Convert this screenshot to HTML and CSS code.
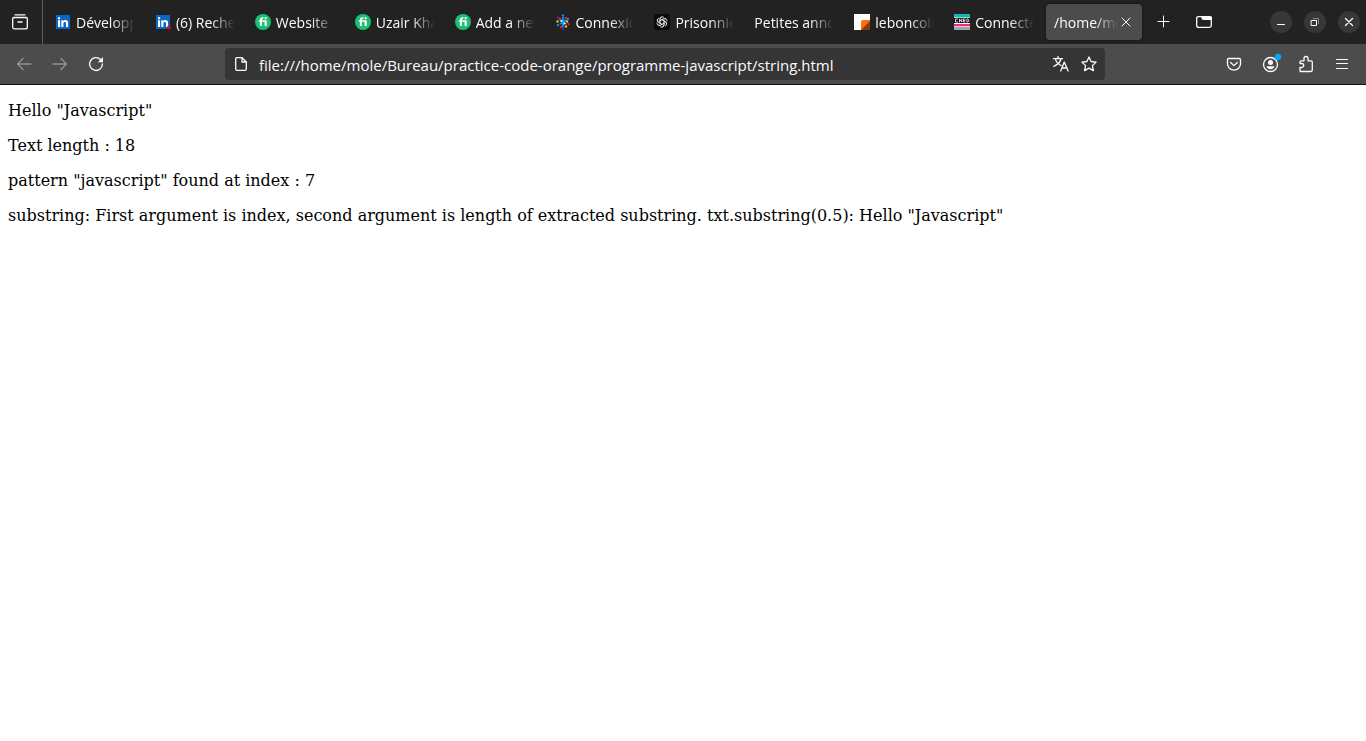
FILE: index.html
```html
<!DOCTYPE html>
<html lang="fr">
<head>
<meta charset="utf-8">
<title>string.html</title>
<link rel="stylesheet" href="styles.css">
</head>
<body>
<svg class="defs" width="0" height="0" aria-hidden="true">
  <symbol id="linkedin" viewBox="0 0 16 16">
    <path fill="#0a66c2" d="M1 1h14v14H1z"/>
    <path fill="#fff" d="M3 6.300h2.100V13H3zM3 3.200h2.100v2H3zM6.300 6.300h2v1c.5-.8 1.200-1.200 2.200-1.200 1.800 0 2.600 1.100 2.600 3.100V13H11V9.500c0-1-.3-1.600-1.200-1.600s-1.400.6-1.400 1.700V13H6.300z"/>
  </symbol>
  <symbol id="fiverr" viewBox="0 0 16 16">
    <circle cx="8" cy="8" r="8" fill="#1dbf73"/>
    <path fill="#fff" d="M3.700 6.200h1.200v-.4c0-1.700 1-2.500 2.700-2.500h.8v1.700h-.6c-.7 0-1 .3-1 .9v.3h4.900V12H9.600V7.800H6.800V12H4.900V7.800H3.700z"/>
    <circle cx="10.600" cy="4.200" r="1.100" fill="#fff"/>
  </symbol>
</svg>

<header class="browser">
  <div class="tabbar">
    <button class="view-button" aria-label="Firefox View">
      <svg class="icon" viewBox="0 0 16 16"><path class="line" d="M3 .8h10M1.800 3.500h12.400q1.100 0 1.100 1.100v8.300q0 2-2 2H2.700q-2 0-2-2V4.600q0-1.100 1.100-1.100zM6 8h4"/></svg>
    </button>
    <nav class="tabs" aria-label="Onglets">
      <button class="tab"><svg class="icon"><use href="#linkedin"/></svg><span class="title">Développeur</span></button>
      <button class="tab"><svg class="icon"><use href="#linkedin"/><circle cx="14" cy="13.500" r="2" fill="#cc1016"/></svg><span class="title">(6) Recherche</span></button>
      <button class="tab"><svg class="icon"><use href="#fiverr"/></svg><span class="title">Website</span></button>
      <button class="tab"><svg class="icon"><use href="#fiverr"/></svg><span class="title">Uzair Khan</span></button>
      <button class="tab"><svg class="icon"><use href="#fiverr"/></svg><span class="title">Add a new</span></button>
      <button class="tab"><svg class="icon" viewBox="0 0 16 16">
        <path stroke="#0a91e8" stroke-width="2" d="M8 3v10M5 6l6 4M11 6l-6 4"/>
        <g fill="#1787e8"><circle cx="8" cy="1.500" r="1.200"/><circle cx="13" cy="5" r="1.200"/><circle cx="3" cy="11" r="1.300"/></g>
        <g fill="#e1263c"><circle cx="5" cy="5" r="1.300"/><circle cx="11" cy="4" r="1.200"/><circle cx="13.500" cy="10" r="1.200"/><circle cx="6" cy="13" r="1.200"/></g>
        <g fill="#f5c518"><circle cx="2.500" cy="7.500" r="1.200"/><circle cx="12" cy="7.500" r="1.200"/><circle cx="11" cy="12.500" r="1.200"/></g>
        <g fill="#eef"><circle cx="6.500" cy="7" r="1.100"/><circle cx="9.500" cy="9.500" r="1.100"/></g>
        <g fill="#4930b5"><circle cx="8" cy="14.700" r="1.200"/><circle cx="3" cy="3.500" r="1.200"/></g>
      </svg><span class="title">Connexion</span></button>
      <button class="tab"><svg class="icon" viewBox="0 0 16 16">
        <rect width="16" height="16" rx="3" fill="#0b0b0b"/>
        <g fill="none" stroke="#e8e8e8" stroke-width=".8">
          <path id="petal" d="M6 8.900V5.200q0-2.300 2.100-2.500 1.100 0 1.900.8M6 6.700l3.100-1.800q2-.9 3.200.7"/>
          <use href="#petal" transform="rotate(60 8 8)"/><use href="#petal" transform="rotate(120 8 8)"/><use href="#petal" transform="rotate(180 8 8)"/><use href="#petal" transform="rotate(240 8 8)"/><use href="#petal" transform="rotate(300 8 8)"/>
        </g>
      </svg><span class="title">Prisonnier</span></button>
      <button class="tab"><span class="title">Petites annonces</span></button>
      <button class="tab"><svg class="icon" viewBox="0 0 16 16"><path fill="#fff" d="M0 0h16v16H0z"/><path fill="#ff6e14" d="M7 16V8q0-2 2-2h7v10z"/><path fill="#8a3b0b" d="M7 16l9-9v9z"/></svg><span class="title">leboncoin</span></button>
      <button class="tab"><svg class="icon" viewBox="0 0 16 16">
        <path fill="#1eb2b4" d="M0 0h16v3H0z"/><path fill="#8ee0df" d="M0 3h16v1H0z"/><path fill="#111" d="M0 4h16v5H0z"/><path fill="#fff" d="M0 9h16v1H0z"/><path fill="#f22480" d="M0 10h16v2H0z"/><path fill="#f3c5d5" d="M0 12h16v1H0z"/><path fill="#a0a5aa" d="M0 13h16v3H0z"/>
        <path fill="none" stroke="#fff" stroke-width=".8" d="M4 5H1.500v3H4M5.500 8.400V5L7.700 8V4.600M11.500 5H9.300v3h2.200M9.300 6.500h2M12.900 5h1l.9.900v1.200l-.9.900h-1z"/>
      </svg><span class="title">Connectez</span></button>
      <div class="tab active"><button class="title">/home/mole</button><button class="close" aria-label="Fermer l'onglet"><svg viewBox="0 0 10 10"><path class="line thin" d="M1 1l8 8M9 1L1 9"/></svg></button></div>
    </nav>
    <div class="tab-tools">
      <button class="tool" aria-label="Nouvel onglet"><svg class="icon" viewBox="0 0 16 16"><path class="line thin" d="M7.500 2v11M2 7.500h11"/></svg></button>
      <button class="tool" aria-label="Liste des onglets"><svg class="icon" viewBox="0 0 16 16"><path class="line" d="M2.500 2.600h11q1.800 0 1.800 1.800v7.200q0 1.800-1.800 1.800h-11Q.7 13.400.7 11.600V4.400q0-1.800 1.800-1.800z"/><path fill="#fbfbfe" d="M5.500 2h8.500q2 0 2 2v2H7.500q-2 0-2-2z"/></svg></button>
    </div>
    <div class="window-tools">
      <button class="round" aria-label="Réduire"><svg class="icon" viewBox="0 0 16 16"><path class="line thin" d="M4.500 10.500h7"/></svg></button>
      <button class="round" aria-label="Restaurer"><svg class="icon" viewBox="0 0 16 16"><path class="line thin" d="M4.500 6.500h5v5h-5z"/><path fill="none" stroke="#888" d="M6 4.500h5.500V10"/></svg></button>
      <button class="round" aria-label="Fermer"><svg class="icon" viewBox="0 0 16 16"><path class="line" d="M4.500 4.500l7 7M11.500 4.500l-7 7"/></svg></button>
    </div>
  </div>

  <div class="toolbar">
    <button class="nav dim" aria-label="Précédent"><svg class="icon" viewBox="0 0 16 16"><path class="line" d="M15 8H1.500M7 2.500L1.500 8 7 13.500"/></svg></button>
    <button class="nav dim" aria-label="Suivant"><svg class="icon" viewBox="0 0 16 16"><path class="line" d="M1 8h13.500M9 2.500L14.500 8 9 13.500"/></svg></button>
    <button class="nav" aria-label="Actualiser"><svg class="icon" viewBox="0 0 16 16"><path class="line" d="M14.400 8A6.400 6.400 0 1 1 12.500 3.500"/><path fill="#fbfbfe" d="M15 1v5.200H9.800z"/></svg></button>
    <div class="urlbar">
      <svg class="icon" viewBox="0 0 16 16"><path class="line" d="M4 1.700h5l4.300 4.300v7q0 1.300-1.300 1.300H4q-1.300 0-1.300-1.300V3q0-1.300 1.300-1.300z"/><path class="line" d="M9 2v4h4"/></svg>
      <input class="address" type="text" aria-label="Adresse" value="file:///home/mole/Bureau/practice-code-orange/programme-javascript/string.html">
      <button class="page-action" aria-label="Traduire"><svg class="icon" viewBox="0 0 16 16"><path class="line" d="M.5 2.600h9M5 .5v2M2.500 3C3 6 6 8.500 8 9.500M8 3C7 6.500 4 9 .8 10.300M7.700 15l3.600-9 3.800 9M9 12h5"/></svg></button>
      <button class="page-action" aria-label="Marque-page"><svg class="icon" viewBox="0 0 16 16"><path class="line" d="M8 1l2.100 4.500 5 .6-3.700 3.500 1 5L8 12.100l-4.400 2.500 1-5L.9 6.100l5-.6z"/></svg></button>
    </div>
    <button class="nav" aria-label="Pocket"><svg class="icon" viewBox="0 0 16 16"><path class="line" d="M2.700 2.500h10.600q1.200 0 1.200 1.200v4a6.500 6.500 0 0 1-13 0v-4q0-1.200 1.200-1.200zM4.700 6.500L8 9.600l3.300-3.100"/></svg></button>
    <button class="nav" aria-label="Compte"><svg class="icon" viewBox="0 0 16 16"><circle class="line" cx="8.500" cy="8.500" r="7"/><circle cx="8.500" cy="6.500" r="2.500" fill="#fbfbfe"/><path fill="#fbfbfe" d="M4.500 10.300h8q-.8 3-4 3t-4-3z"/><circle cx="16" cy="1" r="3.200" fill="#00a8f5"/></svg></button>
    <button class="nav" aria-label="Extensions"><svg class="icon" viewBox="0 0 16 16"><path class="line" d="M2 15V11.500h1.700a2 2 0 0 0 0-4H2V5.800q0-1 1-1h3V2.500a2 2 0 0 1 4 0v2.300h3q1.300 0 1.300 1.300v8q0 1.400-1.300 1.400H2.500q-.5 0-.5-.5z"/></svg></button>
    <button class="nav" aria-label="Menu"><svg class="icon" viewBox="0 0 16 16"><path class="line thin" d="M2.500 3.500h11M2.500 7.500h11M2.500 12.500h11"/></svg></button>
  </div>
</header>

<main class="page">
  <p>Hello "Javascript"</p>
  <p>Text length : 18</p>
  <p>pattern "javascript" found at index : 7</p>
  <p>substring: First argument is index, second argument is length of extracted substring. txt.substring(0.5): Hello "Javascript"</p>
</main>
</body>
</html>
```
FILE: styles.css
```css
* { box-sizing: border-box; }

body {
  margin: 0;
  background: #fff;
  color: #000;
}

.defs { position: absolute; }

button, input {
  margin: 0;
  padding: 0;
  border: 0;
  background: none;
  color: #fbfbfe;
  font: 14px/20px "Open Sans", "Noto Sans", sans-serif;
}

button {
  display: flex;
  align-items: center;
  justify-content: center;
}

.icon {
  flex: none;
  width: 16px;
  height: 16px;
  overflow: visible;
}

.line {
  fill: none;
  stroke: #fbfbfe;
  stroke-width: 1.3;
  stroke-linecap: round;
  stroke-linejoin: round;
}

.thin { stroke-width: 1; }

.tabbar {
  display: flex;
  height: 44px;
  background: #222;
}

.view-button {
  flex: none;
  width: 43px;
  padding-right: 2px;
  border-right: 1px solid #5c5c5c;
}

.tabs {
  display: flex;
  flex: 1;
  min-width: 0;
  padding: 4px 0 4px 2px;
}

.tab {
  display: flex;
  flex: 1 1 0;
  align-items: center;
  justify-content: flex-start;
  gap: 5px;
  min-width: 0;
  margin: 0 2px;
  padding: 0 8px;
}

.title {
  display: block;
  flex: 1;
  min-width: 0;
  padding-top: 2px;
  overflow: hidden;
  text-align: left;
  white-space: nowrap;
  -webkit-mask-image: linear-gradient(to left, transparent, #000 24px);
  mask-image: linear-gradient(to left, transparent, #000 24px);
}

.active {
  border-radius: 4px;
  background: #4c4c4c;
  box-shadow: 0 0 3px #111;
  gap: 0;
}

.close {
  flex: none;
  width: 16px;
  height: 20px;
}

.close svg {
  width: 10px;
  height: 10px;
}

.tab-tools {
  display: flex;
  flex: none;
  align-items: center;
  padding-right: 46px;
}

.tool {
  width: 40px;
  height: 36px;
}

.window-tools {
  display: flex;
  flex: none;
  align-items: center;
  gap: 12px;
  padding-right: 6px;
}

.round {
  width: 22px;
  height: 22px;
  border-radius: 50%;
  background: #373737;
}

.toolbar {
  display: flex;
  align-items: center;
  padding: 4px 6px;
  border-bottom: 1px solid #121212;
  background: #4c4c4c;
}

.nav {
  flex: none;
  width: 36px;
  height: 32px;
}

.dim { opacity: 0.4; }

.urlbar {
  display: flex;
  flex: 1;
  align-items: center;
  min-width: 0;
  height: 32px;
  margin: 0 111px;
  padding: 0 2px 0 8px;
  border-radius: 4px;
  background: #353535;
}

.address {
  flex: 1;
  min-width: 0;
  padding: 2px 0 0 10px;
  font-size: 15px;
}

.page-action {
  flex: none;
  width: 28px;
  height: 28px;
}

.page {
  padding: 16px 8px;
  font: 16px/19px "DejaVu Serif", serif;
}

.page p { margin: 0 0 16px; }
```
